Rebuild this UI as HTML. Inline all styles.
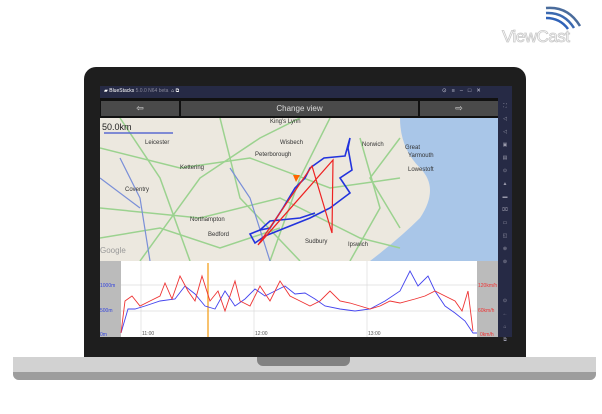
<!DOCTYPE html>
<html><head><style>
*{margin:0;padding:0;box-sizing:border-box}
body{width:602px;height:414px;background:#fff;position:relative;overflow:hidden;font-family:"Liberation Sans",sans-serif}
.a{position:absolute}
</style></head><body>
<!-- logo -->
<svg class="a" style="left:538px;top:4px" width="50" height="28" viewBox="0 0 50 28">
<path d="M8 4 Q30 2 42 22" stroke="#4a6c9c" stroke-width="2.5" fill="none"/>
<path d="M8 9 Q26 8 36 24" stroke="#3b69b0" stroke-width="2.5" fill="none"/>
<path d="M8 14 Q22 14 30 25" stroke="#2f62b8" stroke-width="2.5" fill="none"/>
</svg>
<div class="a" style="left:502px;top:27px;font-size:17px;color:#fff;-webkit-text-stroke:0.8px #c8c8c8;letter-spacing:-0.5px">ViewCast</div>
<!-- lid -->
<div class="a" style="left:84px;top:67px;width:442px;height:294px;background:#1e1e1e;border-radius:12px 12px 0 0"></div>
<!-- base -->
<div class="a" style="left:13px;top:357px;width:583px;height:23px;background:#d2d2d2;border-radius:0 0 6px 6px;overflow:hidden"><div style="position:absolute;left:0;top:15px;width:100%;height:8px;background:#9d9d9d"></div></div>
<div class="a" style="left:257px;top:357px;width:93px;height:9px;background:#828282;border-radius:0 0 6px 6px"></div>
<!-- screen -->
<div class="a" style="left:100px;top:86px;width:412px;height:251px;background:#262a45"></div>
<div class="a" style="left:104px;top:88px;font-size:5px;color:#fff">▰ BlueStacks <span style="color:#889">5.0.0 N64 beta</span> &nbsp;⌂ ⧉</div>
<div class="a" style="left:442px;top:88px;font-size:5.5px;color:#ccd;letter-spacing:5px">⊙≡–□✕</div>
<div class="a" style="left:100px;top:98px;width:398px;height:20px;background:#111"></div>
<div class="a" style="left:101px;top:101px;width:78px;height:15px;background:#4a4a4a;color:#ddd;font-size:9px;text-align:center;line-height:15px">⇦</div>
<div class="a" style="left:181px;top:101px;width:237px;height:15px;background:#4a4a4a;color:#ddd;font-size:8px;text-align:center;line-height:15px">Change view</div>
<div class="a" style="left:420px;top:101px;width:78px;height:15px;background:#4a4a4a;color:#ddd;font-size:9px;text-align:center;line-height:15px">⇨</div>
<!-- sidebar icons -->
<div class="a" style="left:500px;top:100px;width:10px;font-size:5px;color:#99a;line-height:13px;text-align:center">⛶<br>◁<br>◁<br>▣<br>▤<br>⊙<br>▲<br>▬<br>⌧<br>▭<br>◱<br>⊛<br>⊚<br><br><br>⊙<br>←<br>⌂<br>⧉</div>
<!-- map -->
<svg class="a" style="left:100px;top:118px" width="398" height="143" viewBox="0 0 398 143">
<rect width="398" height="143" fill="#ece8df"/>
<path d="M300 0 H398 V143 H270 Q300 120 320 100 Q340 70 320 50 Q300 30 300 0Z" fill="#a9c6e8"/>
<g stroke="#9bd28f" stroke-width="1.5" fill="none">
<path d="M0 30 L80 50 L150 40 L230 70 L300 60"/><path d="M20 0 L60 60 L90 143"/><path d="M120 0 L140 80 L200 143"/>
<path d="M0 90 L100 100 L180 80 L260 120 L300 130"/><path d="M230 0 L200 60 L170 143"/><path d="M260 20 L280 90 L250 143"/>
<path d="M40 143 L100 60 L160 20 L200 0"/><path d="M0 120 L60 110 L120 130 L180 110"/><path d="M300 20 L270 60 L300 110"/>
</g>
<g stroke="#7a8fd8" stroke-width="1.2" fill="none"><path d="M20 40 L40 80 L50 143"/><path d="M0 60 L40 90"/><path d="M130 50 L150 80 L170 143"/></g>
<text x="2" y="12" font-size="9" fill="#222">50.0km</text>
<line x1="4" y1="15" x2="73" y2="15" stroke="#5b6ad0" stroke-width="1.5"/>
<g font-size="6" fill="#333"><text x="45" y="26">Leicester</text><text x="155" y="38">Peterborough</text><text x="25" y="73">Coventry</text><text x="90" y="103">Northampton</text><text x="108" y="118">Bedford</text><text x="262" y="28">Norwich</text><text x="305" y="31">Great</text><text x="308" y="39">Yarmouth</text><text x="308" y="53">Lowestoft</text><text x="248" y="128">Ipswich</text><text x="180" y="26">Wisbech</text><text x="170" y="5">King's Lynn</text><text x="80" y="51">Kettering</text><text x="0" y="135" fill="#999" font-size="8">Google</text><text x="205" y="125">Sudbury</text></g>
<path d="M245 38 L224 40 L210 50 L205 60 L195 70 L183 90 L170 110 L160 112 L150 116 L155 125 L165 118 L185 110 L210 100 L230 90 L250 75 L240 60 L252 52 L248 30 L250 20 L245 38Z" stroke="#2233dd" stroke-width="1.6" fill="none"/>
<path d="M160 112 L170 103 L200 100 L215 95" stroke="#2233dd" stroke-width="1.6" fill="none"/>
<path d="M158 127 L212 48 L232 115 L233 42 Z M160 125 L233 42" stroke="#e22" stroke-width="1.2" fill="none"/>
<path d="M193 57 L200 57 L196 64Z" fill="#f60"/>
</svg>
<!-- chart -->
<svg class="a" style="left:100px;top:261px" width="398" height="76" viewBox="0 0 398 76">
<rect width="398" height="76" fill="#fff"/>
<rect width="21" height="76" fill="#bbb"/><rect x="377" width="21" height="76" fill="#bbb"/>
<g stroke="#ddd" stroke-width="0.7"><line x1="21" y1="24" x2="377" y2="24"/><line x1="21" y1="50" x2="377" y2="50"/><line x1="41" y1="0" x2="41" y2="76"/><line x1="154" y1="0" x2="154" y2="76"/><line x1="267" y1="0" x2="267" y2="76"/></g>
<line x1="108" y1="2" x2="108" y2="76" stroke="#f4a020" stroke-width="1.3"/>
<g font-size="5" fill="#3344dd"><text x="0" y="26">1000m</text><text x="0" y="51">500m</text><text x="0" y="75">0m</text></g>
<g font-size="5" fill="#e33"><text x="378" y="26">120km/h</text><text x="378" y="51">60km/h</text><text x="380" y="75">0km/h</text></g>
<g font-size="5" fill="#555"><text x="42" y="74">11:00</text><text x="155" y="74">12:00</text><text x="268" y="74">13:00</text></g>
<path d="M21 72 L28 48 L35 48 L45 45 L60 40 L75 38 L85 25 L95 33 L105 45 L115 48 L125 30 L135 45 L145 38 L155 28 L165 35 L175 30 L185 25 L195 33 L205 32 L215 38 L225 45 L240 48 L255 50 L270 48 L285 40 L300 30 L310 10 L318 25 L328 15 L335 30 L345 45 L355 52 L365 60 L373 72 L377 72" stroke="#4444ee" stroke-width="0.9" fill="none"/>
<path d="M21 72 L25 40 L32 35 L40 45 L50 40 L60 35 L65 22 L72 38 L80 15 L88 30 L95 40 L102 15 L110 40 L118 30 L125 50 L135 20 L140 40 L150 45 L160 25 L170 40 L180 20 L190 35 L200 40 L210 45 L220 40 L230 30 L240 40 L250 42 L260 45 L270 48 L280 45 L290 40 L300 42 L315 38 L325 35 L335 30 L345 35 L355 40 L362 50 L368 30 L373 70" stroke="#ee3333" stroke-width="0.9" fill="none"/>
</svg>
</body></html>
